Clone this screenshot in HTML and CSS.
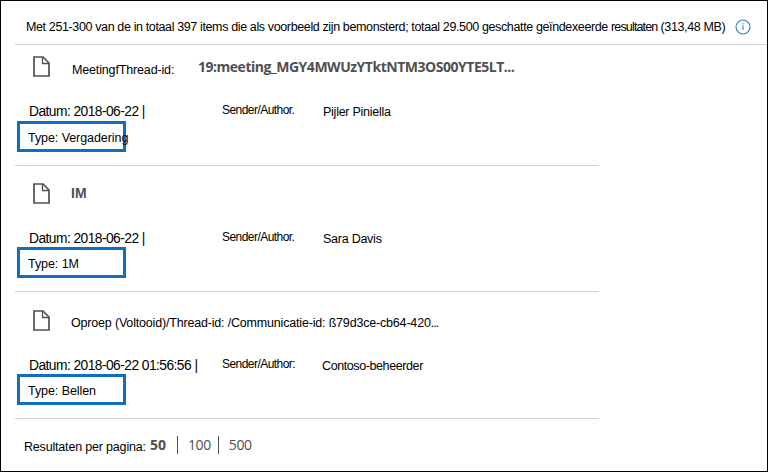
FILE: index.html
```
<!DOCTYPE html>
<html lang="nl">
<head>
<meta charset="utf-8">
<title>Resultaten</title>
<link rel="stylesheet" href="styles.css">
</head>
<body>
<main class="panel">
  <header class="summary">
    <span class="summary-text">Met 251-300 van de in totaal 397 items die als voorbeeld zijn bemonsterd; totaal 29.500 geschatte geïndexeerde <span class="tight">resultaten</span> (313,48 MB)</span>
    <svg class="info" viewBox="0 0 16 16"><circle cx="8" cy="8" r="7"/><path d="M8 6.6V11M8 4.3v1.2"/></svg>
  </header>
  <section class="record meeting">
    <div class="title">
      <svg class="doc" viewBox="0 0 17 21"><path d="M1 1h9l6 6v13H1z"/><path class="fold" d="M9.5 1v6.5H16"/></svg>
      <span class="label">MeetingfThread-id:</span>
      <strong class="value">19:meeting_MGY4MWUzYTktNTM3OS00YTE5LT...</strong>
    </div>
    <div class="meta"><span class="date">Datum: 2018-06-22 |</span><span class="sender">Sender/Author.</span><span class="name">Pijler Piniella</span></div>
    <div class="type"><span>Type: Vergadering</span></div>
  </section>
  <section class="record im">
    <div class="title">
      <svg class="doc" viewBox="0 0 17 21"><path d="M1 1h9l6 6v13H1z"/><path class="fold" d="M9.5 1v6.5H16"/></svg>
      <strong class="value">IM</strong>
    </div>
    <div class="meta"><span class="date">Datum: 2018-06-22 |</span><span class="sender">Sender/Author.</span><span class="name">Sara Davis</span></div>
    <div class="type"><span>Type: 1M</span></div>
  </section>
  <section class="record call">
    <div class="title">
      <svg class="doc" viewBox="0 0 17 21"><path d="M1 1h9l6 6v13H1z"/><path class="fold" d="M9.5 1v6.5H16"/></svg>
      <span class="label">Oproep (Voltooid)/Thread-id: /Communicatie-id: ß79d3ce-cb64-420<span class="dots">...</span></span>
    </div>
    <div class="meta"><span class="date">Datum: 2018-06-22 01:56:56 |</span><span class="sender">Sender/Author:</span><span class="name">Contoso-beheerder</span></div>
    <div class="type"><span>Type: Bellen</span></div>
  </section>
  <footer class="pager">
    <span class="pager-label">Resultaten per pagina:</span>
    <strong class="size">50</strong><span class="size">100</span><span class="size">500</span>
  </footer>
</main>
</body>
</html>
```
FILE: styles.css
```
* { box-sizing: border-box; }
body {
  margin: 0;
  font: 12.5px/16px "Liberation Sans", Arial, sans-serif;
  color: #000;
  background: #fff;
}
.panel {
  width: 768px;
  height: 472px;
  border: 1px solid #000;
  padding-left: 14px;
  white-space: nowrap;
}
.summary {
  display: flex;
  align-items: center;
  height: 44px;
  padding: 8px 0 0 11px;
  border-bottom: 1px solid #d0d0d0;
}
.summary-text { width: 710px; letter-spacing: -0.37px; }
.tight { letter-spacing: -0.85px; }
.info { width: 16px; height: 16px; margin-left: -1px; fill: none; stroke: #2b7cd3; stroke-width: 1.1; }
.record {
  display: flex;
  flex-direction: column;
  width: 584px;
  height: 126px;
  padding-bottom: 13px;
  border-bottom: 1px solid #d0d0d0;
}
.title { display: flex; flex: 1; padding-left: 18px; }
.doc { width: 17px; height: 21px; fill: none; stroke: #505050; stroke-width: 1.7; }
.fold { stroke-width: 1.3; }
.value { font: 700 14px/20px "Open Sans", sans-serif; letter-spacing: -0.48px; color: #505050; }
.meeting { height: 121px; }
.meeting .title { padding-top: 11px; }
.meeting .label { width: 126px; margin: 6px 0 0 22px; letter-spacing: -0.15px; }
.meeting .value { padding-top: 1px; }
.im .title { padding-top: 17px; }
.im .value { margin-left: 21px; font-family: "Liberation Sans", Arial, sans-serif; letter-spacing: 0; }
.call { height: 127px; }
.call .title { padding-top: 18px; }
.call .label { margin: 5px 0 0 21px; letter-spacing: -0.18px; }
.dots { letter-spacing: -1px; }
.meta {
  display: grid;
  grid-template-columns: 193px 101px 1fr;
  align-items: center;
  height: 20px;
  padding-left: 14px;
}
.im .meta, .call .meta { padding-top: 2px; }
.date { font-size: 13.8px; letter-spacing: -0.55px; position: relative; top: 1px; }
.sender { font-size: 12px; letter-spacing: -0.55px; position: relative; top: -1px; }
.name { position: relative; top: 1px; letter-spacing: -0.25px; }
.call .name { left: -1px; letter-spacing: -0.4px; }
.type {
  width: 109px;
  height: 31px;
  margin-left: 2px;
  border: 3px solid #106ebe;
  padding: 6px 0 0 8px;
  letter-spacing: -0.07px;
}
.pager { display: flex; align-items: center; height: 52px; padding-left: 9px; }
.pager-label { width: 126px; margin-top: 3px; letter-spacing: -0.18px; }
.size { font: 14px/18px "Open Sans", sans-serif; letter-spacing: -0.4px; color: #505050; }
.size + .size { border-left: 1px solid #505050; margin-left: 7px; padding-left: 10px; }
strong.size { font-weight: 700; letter-spacing: 0; margin-right: 4px; }
```
